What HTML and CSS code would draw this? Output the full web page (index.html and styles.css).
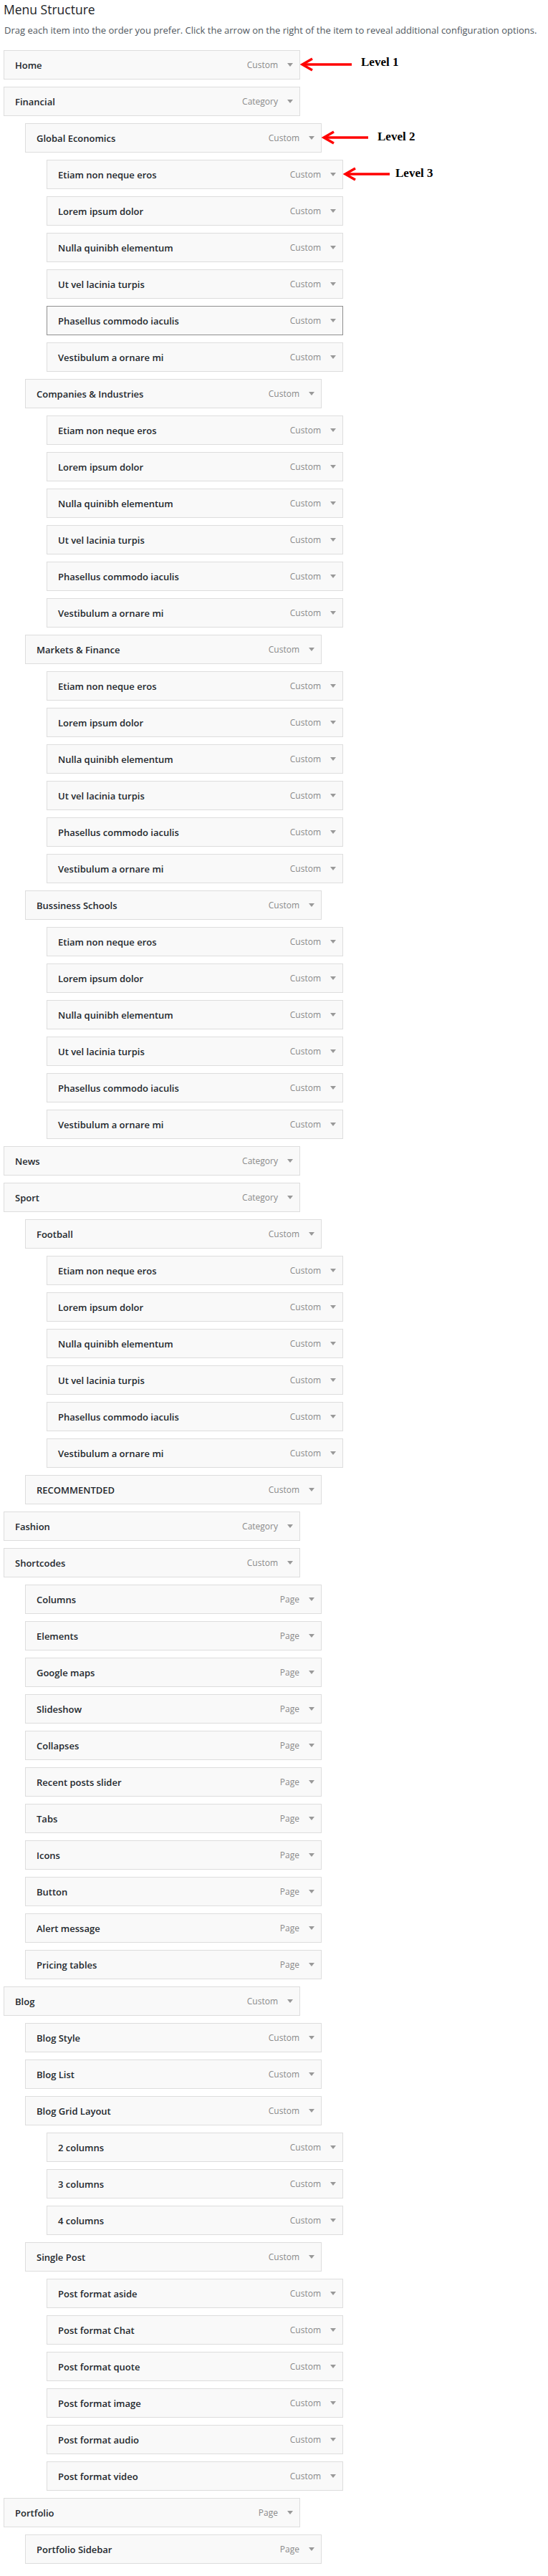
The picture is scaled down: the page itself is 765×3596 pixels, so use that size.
FILE: index.html
```html
<!DOCTYPE html>
<html lang="en">
<head>
    <meta charset="UTF-8">
    <meta name="viewport" content="width=device-width, initial-scale=1.0">
    <title>Menu Structure</title>
    <link rel="stylesheet" href="styles.css">
</head>
<body>

<h2>Menu Structure</h2>
<p class="howto">Drag each item into the order you prefer. Click the arrow on the right of the item to reveal additional configuration options.</p>

<ul class="menu">
    <li class="menu-item depth-0">
        <div class="handle"><span class="title">Home</span><span class="controls"><span class="type">Custom</span><span class="toggle"></span></span></div>
        <div class="note"><svg class="note-arrow" width="72" height="20" viewBox="0 0 72 20"><path d="M3 10 H72" /><path d="M17 2 L3 10 L17 18" /></svg><span class="note-text">Level 1</span></div>
    </li>
    <li class="menu-item depth-0"><div class="handle"><span class="title">Financial</span><span class="controls"><span class="type">Category</span><span class="toggle"></span></span></div></li>
    <li class="menu-item depth-1">
        <div class="handle"><span class="title">Global Economics</span><span class="controls"><span class="type">Custom</span><span class="toggle"></span></span></div>
        <div class="note note-2"><svg class="note-arrow" width="65" height="20" viewBox="0 0 65 20"><path d="M3 10 H65" /><path d="M17 2 L3 10 L17 18" /></svg><span class="note-text">Level 2</span></div>
    </li>
    <li class="menu-item depth-2">
        <div class="handle"><span class="title">Etiam non neque eros</span><span class="controls"><span class="type">Custom</span><span class="toggle"></span></span></div>
        <div class="note note-3"><svg class="note-arrow" width="65" height="20" viewBox="0 0 65 20"><path d="M3 10 H65" /><path d="M17 2 L3 10 L17 18" /></svg><span class="note-text">Level 3</span></div>
    </li>
    <li class="menu-item depth-2"><div class="handle"><span class="title">Lorem ipsum dolor</span><span class="controls"><span class="type">Custom</span><span class="toggle"></span></span></div></li>
    <li class="menu-item depth-2"><div class="handle"><span class="title">Nulla quinibh elementum</span><span class="controls"><span class="type">Custom</span><span class="toggle"></span></span></div></li>
    <li class="menu-item depth-2"><div class="handle"><span class="title">Ut vel lacinia turpis</span><span class="controls"><span class="type">Custom</span><span class="toggle"></span></span></div></li>
    <li class="menu-item depth-2"><div class="handle active"><span class="title">Phasellus commodo iaculis</span><span class="controls"><span class="type">Custom</span><span class="toggle"></span></span></div></li>
    <li class="menu-item depth-2"><div class="handle"><span class="title">Vestibulum a ornare mi</span><span class="controls"><span class="type">Custom</span><span class="toggle"></span></span></div></li>

    <li class="menu-item depth-1"><div class="handle"><span class="title">Companies &amp; Industries</span><span class="controls"><span class="type">Custom</span><span class="toggle"></span></span></div></li>
    <li class="menu-item depth-2"><div class="handle"><span class="title">Etiam non neque eros</span><span class="controls"><span class="type">Custom</span><span class="toggle"></span></span></div></li>
    <li class="menu-item depth-2"><div class="handle"><span class="title">Lorem ipsum dolor</span><span class="controls"><span class="type">Custom</span><span class="toggle"></span></span></div></li>
    <li class="menu-item depth-2"><div class="handle"><span class="title">Nulla quinibh elementum</span><span class="controls"><span class="type">Custom</span><span class="toggle"></span></span></div></li>
    <li class="menu-item depth-2"><div class="handle"><span class="title">Ut vel lacinia turpis</span><span class="controls"><span class="type">Custom</span><span class="toggle"></span></span></div></li>
    <li class="menu-item depth-2"><div class="handle"><span class="title">Phasellus commodo iaculis</span><span class="controls"><span class="type">Custom</span><span class="toggle"></span></span></div></li>
    <li class="menu-item depth-2"><div class="handle"><span class="title">Vestibulum a ornare mi</span><span class="controls"><span class="type">Custom</span><span class="toggle"></span></span></div></li>

    <li class="menu-item depth-1"><div class="handle"><span class="title">Markets &amp; Finance</span><span class="controls"><span class="type">Custom</span><span class="toggle"></span></span></div></li>
    <li class="menu-item depth-2"><div class="handle"><span class="title">Etiam non neque eros</span><span class="controls"><span class="type">Custom</span><span class="toggle"></span></span></div></li>
    <li class="menu-item depth-2"><div class="handle"><span class="title">Lorem ipsum dolor</span><span class="controls"><span class="type">Custom</span><span class="toggle"></span></span></div></li>
    <li class="menu-item depth-2"><div class="handle"><span class="title">Nulla quinibh elementum</span><span class="controls"><span class="type">Custom</span><span class="toggle"></span></span></div></li>
    <li class="menu-item depth-2"><div class="handle"><span class="title">Ut vel lacinia turpis</span><span class="controls"><span class="type">Custom</span><span class="toggle"></span></span></div></li>
    <li class="menu-item depth-2"><div class="handle"><span class="title">Phasellus commodo iaculis</span><span class="controls"><span class="type">Custom</span><span class="toggle"></span></span></div></li>
    <li class="menu-item depth-2"><div class="handle"><span class="title">Vestibulum a ornare mi</span><span class="controls"><span class="type">Custom</span><span class="toggle"></span></span></div></li>

    <li class="menu-item depth-1"><div class="handle"><span class="title">Bussiness Schools</span><span class="controls"><span class="type">Custom</span><span class="toggle"></span></span></div></li>
    <li class="menu-item depth-2"><div class="handle"><span class="title">Etiam non neque eros</span><span class="controls"><span class="type">Custom</span><span class="toggle"></span></span></div></li>
    <li class="menu-item depth-2"><div class="handle"><span class="title">Lorem ipsum dolor</span><span class="controls"><span class="type">Custom</span><span class="toggle"></span></span></div></li>
    <li class="menu-item depth-2"><div class="handle"><span class="title">Nulla quinibh elementum</span><span class="controls"><span class="type">Custom</span><span class="toggle"></span></span></div></li>
    <li class="menu-item depth-2"><div class="handle"><span class="title">Ut vel lacinia turpis</span><span class="controls"><span class="type">Custom</span><span class="toggle"></span></span></div></li>
    <li class="menu-item depth-2"><div class="handle"><span class="title">Phasellus commodo iaculis</span><span class="controls"><span class="type">Custom</span><span class="toggle"></span></span></div></li>
    <li class="menu-item depth-2"><div class="handle"><span class="title">Vestibulum a ornare mi</span><span class="controls"><span class="type">Custom</span><span class="toggle"></span></span></div></li>

    <li class="menu-item depth-0"><div class="handle"><span class="title">News</span><span class="controls"><span class="type">Category</span><span class="toggle"></span></span></div></li>
    <li class="menu-item depth-0"><div class="handle"><span class="title">Sport</span><span class="controls"><span class="type">Category</span><span class="toggle"></span></span></div></li>
    <li class="menu-item depth-1"><div class="handle"><span class="title">Football</span><span class="controls"><span class="type">Custom</span><span class="toggle"></span></span></div></li>
    <li class="menu-item depth-2"><div class="handle"><span class="title">Etiam non neque eros</span><span class="controls"><span class="type">Custom</span><span class="toggle"></span></span></div></li>
    <li class="menu-item depth-2"><div class="handle"><span class="title">Lorem ipsum dolor</span><span class="controls"><span class="type">Custom</span><span class="toggle"></span></span></div></li>
    <li class="menu-item depth-2"><div class="handle"><span class="title">Nulla quinibh elementum</span><span class="controls"><span class="type">Custom</span><span class="toggle"></span></span></div></li>
    <li class="menu-item depth-2"><div class="handle"><span class="title">Ut vel lacinia turpis</span><span class="controls"><span class="type">Custom</span><span class="toggle"></span></span></div></li>
    <li class="menu-item depth-2"><div class="handle"><span class="title">Phasellus commodo iaculis</span><span class="controls"><span class="type">Custom</span><span class="toggle"></span></span></div></li>
    <li class="menu-item depth-2"><div class="handle"><span class="title">Vestibulum a ornare mi</span><span class="controls"><span class="type">Custom</span><span class="toggle"></span></span></div></li>
    <li class="menu-item depth-1"><div class="handle"><span class="title">RECOMMENTDED</span><span class="controls"><span class="type">Custom</span><span class="toggle"></span></span></div></li>

    <li class="menu-item depth-0"><div class="handle"><span class="title">Fashion</span><span class="controls"><span class="type">Category</span><span class="toggle"></span></span></div></li>
    <li class="menu-item depth-0"><div class="handle"><span class="title">Shortcodes</span><span class="controls"><span class="type">Custom</span><span class="toggle"></span></span></div></li>
    <li class="menu-item depth-1"><div class="handle"><span class="title">Columns</span><span class="controls"><span class="type">Page</span><span class="toggle"></span></span></div></li>
    <li class="menu-item depth-1"><div class="handle"><span class="title">Elements</span><span class="controls"><span class="type">Page</span><span class="toggle"></span></span></div></li>
    <li class="menu-item depth-1"><div class="handle"><span class="title">Google maps</span><span class="controls"><span class="type">Page</span><span class="toggle"></span></span></div></li>
    <li class="menu-item depth-1"><div class="handle"><span class="title">Slideshow</span><span class="controls"><span class="type">Page</span><span class="toggle"></span></span></div></li>
    <li class="menu-item depth-1"><div class="handle"><span class="title">Collapses</span><span class="controls"><span class="type">Page</span><span class="toggle"></span></span></div></li>
    <li class="menu-item depth-1"><div class="handle"><span class="title">Recent posts slider</span><span class="controls"><span class="type">Page</span><span class="toggle"></span></span></div></li>
    <li class="menu-item depth-1"><div class="handle"><span class="title">Tabs</span><span class="controls"><span class="type">Page</span><span class="toggle"></span></span></div></li>
    <li class="menu-item depth-1"><div class="handle"><span class="title">Icons</span><span class="controls"><span class="type">Page</span><span class="toggle"></span></span></div></li>
    <li class="menu-item depth-1"><div class="handle"><span class="title">Button</span><span class="controls"><span class="type">Page</span><span class="toggle"></span></span></div></li>
    <li class="menu-item depth-1"><div class="handle"><span class="title">Alert message</span><span class="controls"><span class="type">Page</span><span class="toggle"></span></span></div></li>
    <li class="menu-item depth-1"><div class="handle"><span class="title">Pricing tables</span><span class="controls"><span class="type">Page</span><span class="toggle"></span></span></div></li>

    <li class="menu-item depth-0"><div class="handle"><span class="title">Blog</span><span class="controls"><span class="type">Custom</span><span class="toggle"></span></span></div></li>
    <li class="menu-item depth-1"><div class="handle"><span class="title">Blog Style</span><span class="controls"><span class="type">Custom</span><span class="toggle"></span></span></div></li>
    <li class="menu-item depth-1"><div class="handle"><span class="title">Blog List</span><span class="controls"><span class="type">Custom</span><span class="toggle"></span></span></div></li>
    <li class="menu-item depth-1"><div class="handle"><span class="title">Blog Grid Layout</span><span class="controls"><span class="type">Custom</span><span class="toggle"></span></span></div></li>
    <li class="menu-item depth-2"><div class="handle"><span class="title">2 columns</span><span class="controls"><span class="type">Custom</span><span class="toggle"></span></span></div></li>
    <li class="menu-item depth-2"><div class="handle"><span class="title">3 columns</span><span class="controls"><span class="type">Custom</span><span class="toggle"></span></span></div></li>
    <li class="menu-item depth-2"><div class="handle"><span class="title">4 columns</span><span class="controls"><span class="type">Custom</span><span class="toggle"></span></span></div></li>
    <li class="menu-item depth-1"><div class="handle"><span class="title">Single Post</span><span class="controls"><span class="type">Custom</span><span class="toggle"></span></span></div></li>
    <li class="menu-item depth-2"><div class="handle"><span class="title">Post format aside</span><span class="controls"><span class="type">Custom</span><span class="toggle"></span></span></div></li>
    <li class="menu-item depth-2"><div class="handle"><span class="title">Post format Chat</span><span class="controls"><span class="type">Custom</span><span class="toggle"></span></span></div></li>
    <li class="menu-item depth-2"><div class="handle"><span class="title">Post format quote</span><span class="controls"><span class="type">Custom</span><span class="toggle"></span></span></div></li>
    <li class="menu-item depth-2"><div class="handle"><span class="title">Post format image</span><span class="controls"><span class="type">Custom</span><span class="toggle"></span></span></div></li>
    <li class="menu-item depth-2"><div class="handle"><span class="title">Post format audio</span><span class="controls"><span class="type">Custom</span><span class="toggle"></span></span></div></li>
    <li class="menu-item depth-2"><div class="handle"><span class="title">Post format video</span><span class="controls"><span class="type">Custom</span><span class="toggle"></span></span></div></li>

    <li class="menu-item depth-0"><div class="handle"><span class="title">Portfolio</span><span class="controls"><span class="type">Page</span><span class="toggle"></span></span></div></li>
    <li class="menu-item depth-1"><div class="handle"><span class="title">Portfolio Sidebar</span><span class="controls"><span class="type">Page</span><span class="toggle"></span></span></div></li>
</ul>

</body>
</html>
```

FILE: styles.css
```css
body {
    margin: 0;
    padding: 0 5px;
    font-family: "Open Sans", "Noto Sans", sans-serif;
    background-color: #ffffff;
    color: #23282d;
}
h2 {
    margin: 1px 0 0;
    font-size: 17.5px;
    font-weight: 400;
    line-height: 24px;
    color: #1d2327;
}
.howto {
    margin: 7px 0 18px 1px;
    font-size: 13px;
    line-height: 20px;
    color: #50575e;
    white-space: nowrap;
}
.menu {
    list-style: none;
    margin: 0;
    padding: 0;
}
.menu-item {
    position: relative;
    width: 414px;
    margin-bottom: 10px;
}
.depth-1 {
    margin-left: 30px;
}
.depth-2 {
    margin-left: 60px;
}
.handle {
    box-sizing: border-box;
    height: 41px;
    display: flex;
    align-items: center;
    justify-content: space-between;
    padding: 0 9px 0 15px;
    background-color: #f9f9f9;
    border: 1px solid #dddddd;
}
.handle.active {
    border-color: #8f8f8f;
}
.title {
    font-size: 13px;
    font-weight: 600;
    color: #23282d;
}
.controls {
    display: flex;
    align-items: center;
    gap: 13px;
}
.type {
    font-size: 12px;
    color: #8a8a8a;
}
.toggle {
    width: 0;
    height: 0;
    border-left: 4px solid transparent;
    border-right: 4px solid transparent;
    border-top: 5px solid #999999;
}
/* annotations beside the first items */
.note {
    position: absolute;
    top: 0;
    left: 100%;
    height: 41px;
    display: flex;
    align-items: center;
    gap: 13px;
    white-space: nowrap;
}
.note-arrow {
    display: block;
    margin-top: -2px;
}
.note-arrow path {
    fill: none;
    stroke: #ff0000;
    stroke-width: 3.5;
}
.note-text {
    font-family: "Liberation Serif", serif;
    font-size: 17px;
    font-weight: bold;
    color: #000000;
    margin-top: -8px;
}
.note-2 .note-text,
.note-3 .note-text {
    margin-top: -4px;
}
.note-3 {
    gap: 8px;
}
```
